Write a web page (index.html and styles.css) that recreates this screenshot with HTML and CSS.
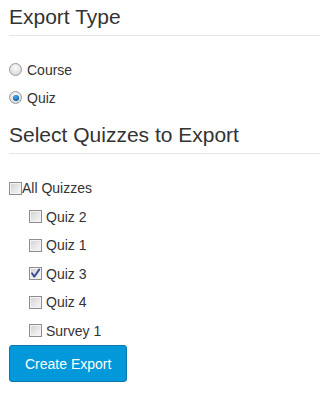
FILE: index.html
```html
<!DOCTYPE html>
<html>
<head>
<meta charset="utf-8">
<link rel="stylesheet" href="styles.css">
</head>
<body>
<div class="page">
  <h3 class="section-title first">Export Type</h3>
  <div class="radio-list">
    <label class="opt"><span class="radio"></span>Course</label>
    <label class="opt"><span class="radio checked"></span>Quiz</label>
  </div>
  <h3 class="section-title second">Select Quizzes to Export</h3>
  <div class="check-list">
    <label class="opt all"><span class="box"></span>All Quizzes</label>
    <div class="nested">
      <label class="opt"><span class="box"></span>Quiz 2</label>
      <label class="opt"><span class="box"></span>Quiz 1</label>
      <label class="opt"><span class="box"><svg class="tick" width="11" height="11" viewBox="0 0 11 11"><path d="M2 5.2 L4.3 8.6 L9.2 1.6" fill="none" stroke="#3d4f94" stroke-width="1.9" stroke-linecap="round" stroke-linejoin="round"/></svg></span>Quiz 3</label>
      <label class="opt"><span class="box"></span>Quiz 4</label>
      <label class="opt"><span class="box"></span>Survey 1</label>
    </div>
  </div>
  <button class="btn-primary">Create Export</button>
</div>
</body>
</html>
```

FILE: styles.css
```css
html, body {
  margin: 0;
  padding: 0;
  background: #fff;
}
body {
  font-family: "Liberation Sans", Arial, sans-serif;
  font-size: 14px;
  line-height: 20px;
  color: #333;
}
.page {
  padding-left: 9px;
  display: flex;
  flex-direction: column;
  align-items: flex-start;
}
.section-title {
  align-self: stretch;
  font-size: 21px;
  line-height: 23px;
  font-weight: normal;
  color: #333;
  margin: 0;
  padding-bottom: 7px;
  border-bottom: 1px solid #e5e5e5;
}
.section-title.first {
  margin-top: 4.6px;
}
.section-title.second {
  margin-top: 15.2px;
}
.radio-list {
  display: flex;
  flex-direction: column;
  gap: 8px;
  margin-top: 24.4px;
}
.check-list {
  display: flex;
  flex-direction: column;
  gap: 8.5px;
  margin-top: 24px;
}
.nested {
  display: flex;
  flex-direction: column;
  gap: 8.5px;
  padding-left: 20px;
}
.opt {
  display: flex;
  align-items: center;
  height: 20px;
}
.radio {
  width: 11px;
  height: 11px;
  border-radius: 50%;
  border: 1px solid #9a9a9a;
  background: radial-gradient(circle at 50% 35%, #fafafa 0%, #e2e2e2 60%, #cfcfcf 100%);
  margin-right: 5px;
  display: flex;
  align-items: center;
  justify-content: center;
}
.radio.checked::after {
  content: "";
  width: 6px;
  height: 6px;
  border-radius: 50%;
  background: radial-gradient(circle at 45% 35%, #4fb0ee 0%, #1572b8 55%, #0a3f6e 100%);
}
.box {
  width: 11px;
  height: 11px;
  border: 1px solid #8e8e8e;
  background: linear-gradient(135deg, #cfcfcf 0%, #e6e6e6 50%, #f7f7f7 100%);
  box-shadow: inset 0 0 0 1px #f3f3f3;
  margin-right: 4px;
  display: flex;
  align-items: center;
  justify-content: center;
  flex: none;
}
.all .box {
  margin-right: 0;
}
.tick {
  display: block;
}
.btn-primary {
  margin-top: 4.6px;
  font-family: "Liberation Sans", Arial, sans-serif;
  font-size: 14px;
  line-height: 20px;
  color: #fff;
  background: #0398da;
  border: 1px solid #0a78ad;
  border-radius: 3px;
  padding: 7.5px 15px;
  cursor: pointer;
}
```
